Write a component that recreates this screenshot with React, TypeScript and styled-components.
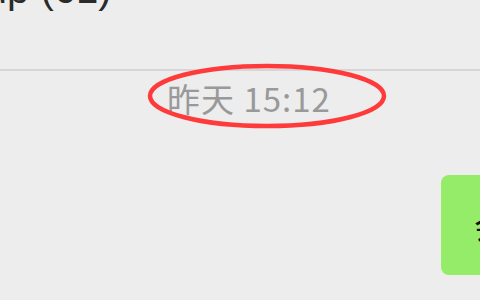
import React from "react";
import styled, { createGlobalStyle } from "styled-components";

const GlobalStyle = createGlobalStyle`
  html, body {
    margin: 0;
    padding: 0;
    background: #ededed;
    overflow: hidden;
  }
`;

const Page = styled.div`
  width: 480px;
  height: 300px;
  overflow: hidden;
  display: flex;
  flex-direction: column;
  background: #ededed;
`;

const Header = styled.header`
  height: 69px;
  flex-shrink: 0;
  overflow: hidden;
  border-bottom: 2px solid #d6d6d6;
`;

const Title = styled.div`
  margin-top: -31px;
  margin-left: -73px;
  font-family: "Liberation Sans", Arial, "Noto Sans CJK SC", sans-serif;
  font-size: 40px;
  line-height: 40px;
  color: #2a2a2a;
  white-space: nowrap;
`;

const TimeRow = styled.div`
  display: flex;
  justify-content: center;
  padding-left: 18px;
  margin-top: 7px;
`;

const Stamp = styled.div`
  position: relative;
  font-family: "Noto Sans CJK SC", "Noto Sans", sans-serif;
  font-size: 33px;
  letter-spacing: 1px;
  line-height: 40px;
  color: #999999;
  white-space: nowrap;
`;

const Annotation = styled.svg`
  position: absolute;
  left: calc(50% - 104px);
  top: -16px;
  width: 244px;
  height: 68px;
  overflow: visible;
  pointer-events: none;
`;

const MessageRow = styled.div`
  display: flex;
  padding-left: 441px;
  margin-top: 57px;
`;

const Bubble = styled.div`
  flex-shrink: 0;
  box-sizing: border-box;
  height: 100px;
  padding: 26px 30px 26px 33px;
  background: #95ec69;
  border-radius: 8px;
  font-family: "Noto Sans CJK SC", "Noto Sans", sans-serif;
  font-size: 32px;
  line-height: 48px;
  color: #111;
  white-space: nowrap;
`;

export default function App() {
  return (
    <>
      <GlobalStyle />
      <Page>
        <Header>
          <Title>group (61)</Title>
        </Header>
        <TimeRow>
          <Stamp>
            昨天 15:12
            <Annotation viewBox="0 0 244 68">
              <ellipse
                cx="122"
                cy="34"
                rx="117"
                ry="30"
                fill="none"
                stroke="#ff3a3a"
                strokeWidth="4.5"
              />
            </Annotation>
          </Stamp>
        </TimeRow>
        <MessageRow>
          <Bubble>会议</Bubble>
        </MessageRow>
      </Page>
    </>
  );
}
